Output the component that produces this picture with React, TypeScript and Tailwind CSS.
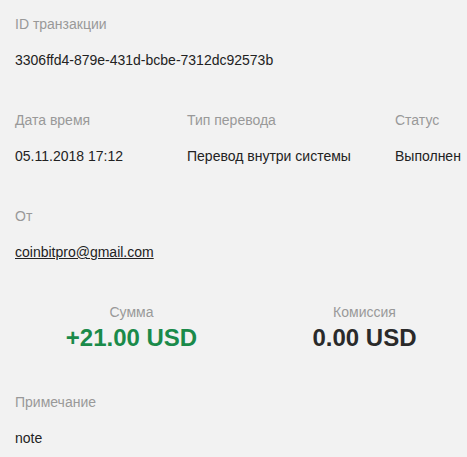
export default function App() {
    return (
        <div className="min-h-screen bg-[#f2f2f2] pl-[15px] pt-[14px] font-['Liberation_Sans',Arial,sans-serif] text-[14px] leading-[20px] text-[#222]">
            <div className="flex flex-col gap-[40px]">
                {/* ID */}
                <div>
                    <div className="text-[#999]">ID транзакции</div>
                    <div className="mt-[16px]">3306ffd4-879e-431d-bcbe-7312dc92573b</div>
                </div>

                {/* Date / type / status */}
                <div className="grid grid-cols-[172px_208px_auto]">
                    <div>
                        <div className="text-[#999]">Дата время</div>
                        <div className="mt-[16px]">05.11.2018 17:12</div>
                    </div>
                    <div>
                        <div className="text-[#999]">Тип перевода</div>
                        <div className="mt-[16px]">Перевод внутри системы</div>
                    </div>
                    <div>
                        <div className="text-[#999]">Статус</div>
                        <div className="mt-[16px] whitespace-nowrap">Выполнен</div>
                    </div>
                </div>

                {/* From */}
                <div>
                    <div className="text-[#999]">От</div>
                    <div className="mt-[16px]">
                        <a href="#" className="underline text-[#222]">coinbitpro@gmail.com</a>
                    </div>
                </div>

                {/* Amounts */}
                <div className="flex">
                    <div className="w-[233px] shrink-0 text-center">
                        <div className="text-[#999]">Сумма</div>
                        <div className="mt-[2px] text-[24px] leading-[28px] font-bold text-[#1a8a4a]">+21.00 USD</div>
                    </div>
                    <div className="w-[233px] shrink-0 text-center">
                        <div className="text-[#999]">Комиссия</div>
                        <div className="mt-[2px] text-[24px] leading-[28px] font-bold text-[#2a2a2a]">0.00 USD</div>
                    </div>
                </div>

                {/* Note */}
                <div>
                    <div className="text-[#999]">Примечание</div>
                    <div className="mt-[16px]">note</div>
                </div>
            </div>
        </div>
    );
}
